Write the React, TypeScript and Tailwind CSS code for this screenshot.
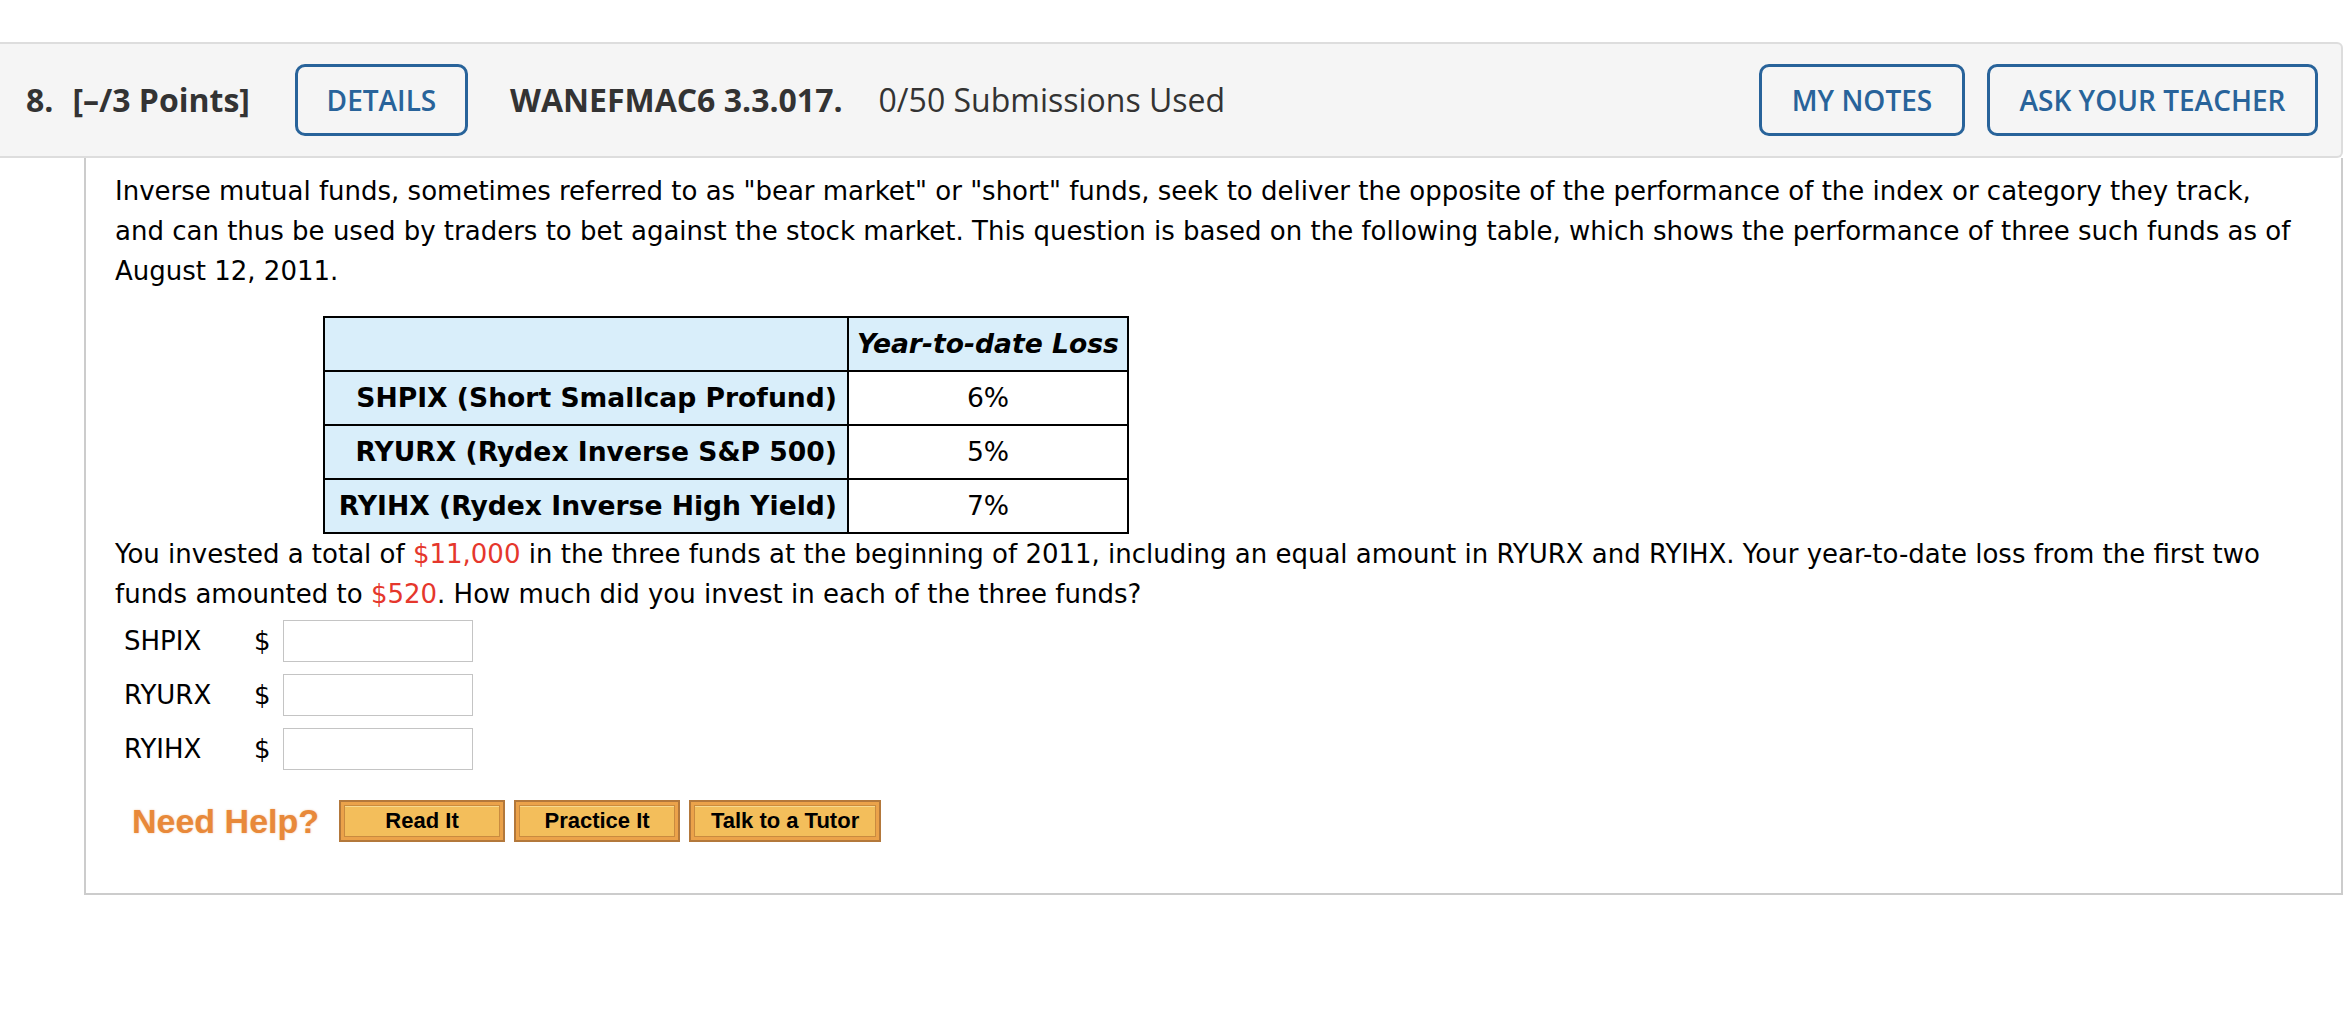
export default function App() {
  const rows = [
    { name: "SHPIX (Short Smallcap Profund)", loss: "6%" },
    { name: "RYURX (Rydex Inverse S&P 500)", loss: "5%" },
    { name: "RYIHX (Rydex Inverse High Yield)", loss: "7%" },
  ];
  const inputs = ["SHPIX", "RYURX", "RYIHX"];
  const helpButtons = [
    { label: "Read It", w: "w-[166px]" },
    { label: "Practice It", w: "w-[166px]" },
    { label: "Talk to a Tutor", w: "w-[192px]" },
  ];

  return (
    <div className="min-h-screen w-[2346px] bg-white pt-[42px]">
      {/* question header */}
      <div className="flex h-[116px] w-[2343px] items-center rounded-r-[6px] border-y-2 border-r-2 border-[#dddddd] bg-[#f5f5f5] pr-[23px] font-['Open_Sans',sans-serif] text-[32px] text-[#333333]">
        <span className="ml-[26px] font-bold">8.</span>
        <span className="ml-[19px] font-bold">[&ndash;/3 Points]</span>
        <button className="ml-[45px] flex h-[72px] w-[173px] items-center justify-center rounded-[10px] border-[3px] border-[#28639a] text-[28px] font-semibold text-[#28639a]">
          DETAILS
        </button>
        <span className="ml-[42px] font-bold">WANEFMAC6 3.3.017.</span>
        <span className="ml-[36px]">0/50 Submissions Used</span>
        <div className="ml-auto flex gap-[22px]">
          <button className="flex h-[72px] w-[206px] items-center justify-center rounded-[10px] border-[3px] border-[#28639a] text-[28px] font-semibold text-[#28639a]">
            MY NOTES
          </button>
          <button className="flex h-[72px] w-[331px] items-center justify-center rounded-[10px] border-[3px] border-[#28639a] text-[28px] font-semibold text-[#28639a]">
            ASK YOUR TEACHER
          </button>
        </div>
      </div>

      {/* question body */}
      <div className="ml-[84px] h-[737px] w-[2259px] border-x-2 border-b-2 border-[#cccccc] pl-[29px] pt-[13px] font-['DejaVu_Sans',Verdana,sans-serif] text-[26px] leading-[40px] text-black">
        <p className="whitespace-nowrap">
          Inverse mutual funds, sometimes referred to as "bear market" or "short" funds, seek to deliver the opposite of the performance of the index or category they track,
          <br />
          and can thus be used by traders to bet against the stock market. This question is based on the following table, which shows the performance of three such funds as of
          <br />
          August 12, 2011.
        </p>

        <table className="ml-[208px] mt-[25px] w-[806px] border-collapse text-[26.6px]">
          <tbody>
            <tr className="h-[54px]">
              <td className="w-[524px] border-2 border-black bg-[#d9eefa]"></td>
              <td className="border-2 border-black bg-[#d9eefa] text-center font-bold italic">
                Year-to-date Loss
              </td>
            </tr>
            {rows.map((r) => (
              <tr key={r.name} className="h-[54px]">
                <td className="border-2 border-black bg-[#d9eefa] pr-[10px] text-right font-bold whitespace-nowrap">
                  {r.name}
                </td>
                <td className="border-2 border-black bg-white text-center">{r.loss}</td>
              </tr>
            ))}
          </tbody>
        </table>

        <p className="whitespace-nowrap">
          You invested a total of <span className="text-[#e5372c]">$11,000</span> in the three funds at the beginning of 2011, including an equal amount in RYURX and RYIHX. Your year-to-date loss from the first two
          <br />
          funds amounted to <span className="text-[#e5372c]">$520</span>. How much did you invest in each of the three funds?
        </p>

        <div className="mt-[6px] flex flex-col gap-[12px]">
          {inputs.map((name) => (
            <div key={name} className="flex h-[42px] items-center">
              <span className="ml-[9px] w-[130px]">{name}</span>
              <span className="w-[29px]">$</span>
              <input className="h-[42px] w-[190px] border border-[#c4c4c4] bg-white outline-none" />
            </div>
          ))}
        </div>

        <div className="mt-[30px] flex items-center font-['Liberation_Sans',Arial,sans-serif]">
          <span className="ml-[17px] mr-[20px] text-[34px] font-bold leading-none text-[#e8893a] [text-shadow:0_0_2px_rgba(232,137,58,0.5)]">
            Need Help?
          </span>
          <div className="flex gap-[9px]">
            {helpButtons.map((b) => (
              <div key={b.label} className={`h-[42px] ${b.w} border-2 border-[#b3783b] bg-[#eba24a] p-[3px]`}>
                <div className="flex h-full items-center justify-center border border-[#c98b3f] bg-[#f3be5b] text-[22px] font-bold leading-none text-black shadow-[inset_0_1px_0_#f8d98f]">
                  {b.label}
                </div>
              </div>
            ))}
          </div>
        </div>
      </div>
    </div>
  );
}
